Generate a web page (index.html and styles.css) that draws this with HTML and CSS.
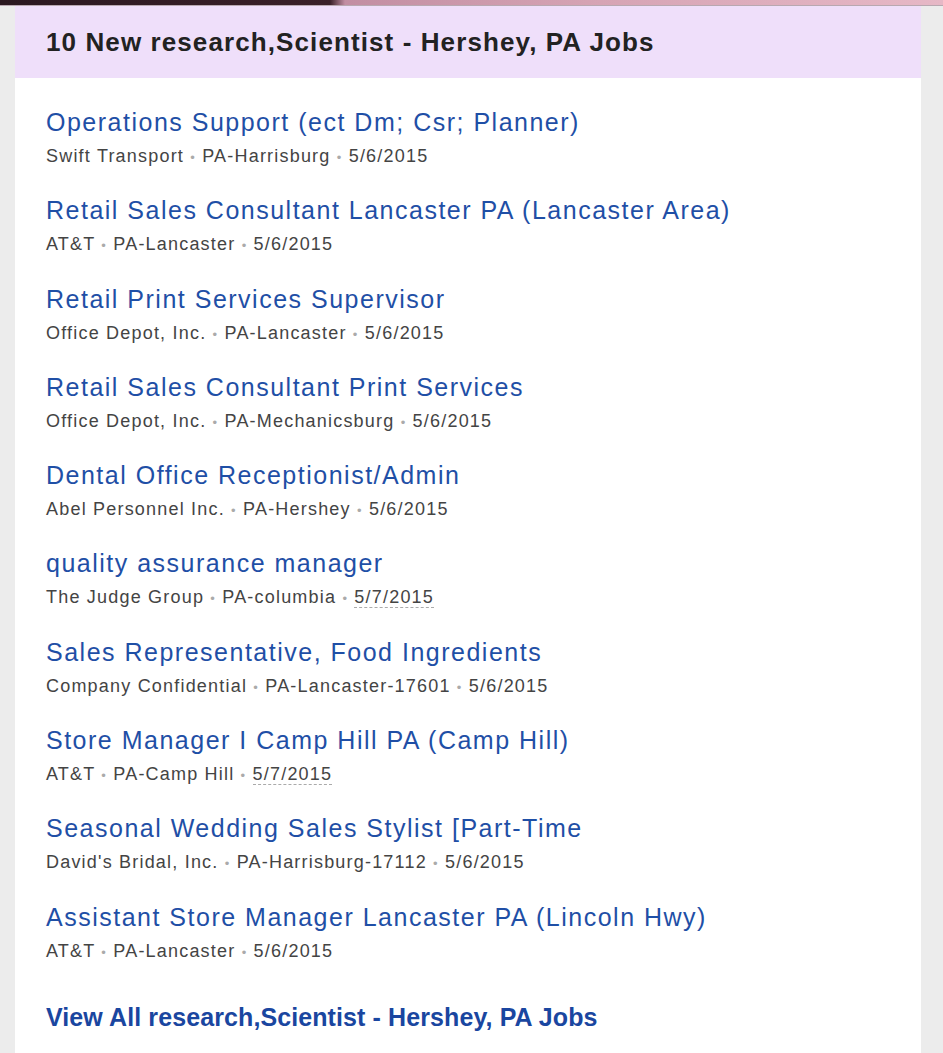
FILE: index.html
```html
<!DOCTYPE html>
<html>
<head>
    <title>research,Scientist - Hershey, PA Jobs</title>
    <link rel="stylesheet" href="styles.css">
</head>
<body>
    <div class="banner"></div>
    <div class="panel">
        <h2 class="panel-title">10 New research,Scientist - Hershey, PA Jobs</h2>
        <ul class="jobs">
            <li class="job">
                <a class="job-title" href="#">Operations Support (ect Dm; Csr; Planner)</a>
                <div class="job-meta">Swift Transport <span class="dot">&bull;</span> PA-Harrisburg <span class="dot">&bull;</span> 5/6/2015</div>
            </li>
            <li class="job">
                <a class="job-title" href="#">Retail Sales Consultant Lancaster PA (Lancaster Area)</a>
                <div class="job-meta">AT&amp;T <span class="dot">&bull;</span> PA-Lancaster <span class="dot">&bull;</span> 5/6/2015</div>
            </li>
            <li class="job">
                <a class="job-title" href="#">Retail Print Services Supervisor</a>
                <div class="job-meta">Office Depot, Inc. <span class="dot">&bull;</span> PA-Lancaster <span class="dot">&bull;</span> 5/6/2015</div>
            </li>
            <li class="job">
                <a class="job-title" href="#">Retail Sales Consultant Print Services</a>
                <div class="job-meta">Office Depot, Inc. <span class="dot">&bull;</span> PA-Mechanicsburg <span class="dot">&bull;</span> 5/6/2015</div>
            </li>
            <li class="job">
                <a class="job-title" href="#">Dental Office Receptionist/Admin</a>
                <div class="job-meta">Abel Personnel Inc. <span class="dot">&bull;</span> PA-Hershey <span class="dot">&bull;</span> 5/6/2015</div>
            </li>
            <li class="job">
                <a class="job-title" href="#">quality assurance manager</a>
                <div class="job-meta">The Judge Group <span class="dot">&bull;</span> PA-columbia <span class="dot">&bull;</span> <abbr class="date">5/7/2015</abbr></div>
            </li>
            <li class="job">
                <a class="job-title" href="#">Sales Representative, Food Ingredients</a>
                <div class="job-meta">Company Confidential <span class="dot">&bull;</span> PA-Lancaster-17601 <span class="dot">&bull;</span> 5/6/2015</div>
            </li>
            <li class="job">
                <a class="job-title" href="#">Store Manager I Camp Hill PA (Camp Hill)</a>
                <div class="job-meta">AT&amp;T <span class="dot">&bull;</span> PA-Camp Hill <span class="dot">&bull;</span> <abbr class="date">5/7/2015</abbr></div>
            </li>
            <li class="job">
                <a class="job-title" href="#">Seasonal Wedding Sales Stylist [Part-Time</a>
                <div class="job-meta">David's Bridal, Inc. <span class="dot">&bull;</span> PA-Harrisburg-17112 <span class="dot">&bull;</span> 5/6/2015</div>
            </li>
            <li class="job">
                <a class="job-title" href="#">Assistant Store Manager Lancaster PA (Lincoln Hwy)</a>
                <div class="job-meta">AT&amp;T <span class="dot">&bull;</span> PA-Lancaster <span class="dot">&bull;</span> 5/6/2015</div>
            </li>
        </ul>
        <a class="view-all" href="#">View All research,Scientist - Hershey, PA Jobs</a>
    </div>
</body>
</html>
```

FILE: styles.css
```css
body {
    margin: 0;
    font-family: "Liberation Sans", Arial, sans-serif;
    background-color: #ececec;
}

.banner {
    height: 5px;
    background: linear-gradient(to right, #2b1820 0, #3a2028 330px, #c28ea2 345px, #d6a4b4 600px, #e6b8c6 100%);
    border-bottom: 1px solid #b8a8b0;
}

.panel {
    width: 906px;
    margin-left: 15px;
    background-color: #fff;
    min-height: 1047px;
}

.panel-title {
    margin: 0;
    height: 72px;
    line-height: 72px;
    padding-left: 31px;
    font-size: 26px;
    letter-spacing: 1.1px;
    font-weight: bold;
    color: #222;
    background-color: #efdffa;
}

.jobs {
    list-style: none;
    margin: 0;
    padding: 26px 31px 0;
}

.job {
    margin-bottom: 24.3px;
}

.job-title {
    display: block;
    font-size: 25px;
    line-height: 36px;
    letter-spacing: 1.5px;
    color: #1f4fa6;
    text-decoration: none;
}

.job-meta {
    margin-top: 4px;
    height: 24px;
    font-size: 18px;
    line-height: 24px;
    letter-spacing: 1.2px;
    color: #444;
}

.dot {
    color: #aaa;
    font-size: 13px;
    line-height: 0;
}

.date {
    text-decoration: none;
    border-bottom: 1px dashed #aaa;
}

.view-all {
    display: block;
    margin: 39px 31px 0;
    font-size: 25px;
    line-height: 30px;
    letter-spacing: 0.1px;
    font-weight: bold;
    color: #1a46a0;
    text-decoration: none;
}
```
